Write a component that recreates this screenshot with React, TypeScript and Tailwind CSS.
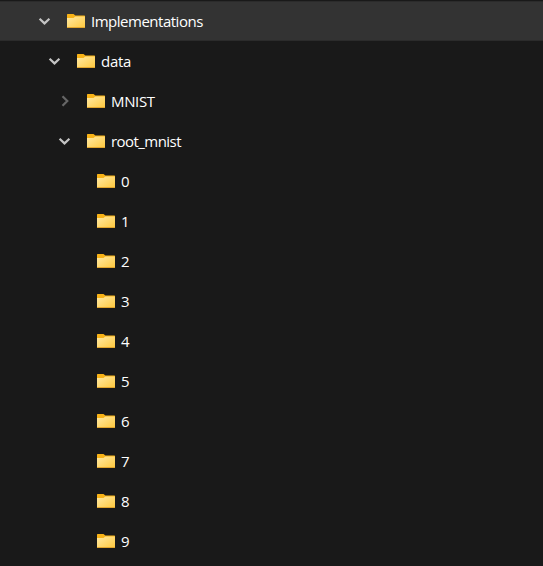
type Item = { name: string; indent: string; state?: 'open' | 'closed'; selected?: boolean; tracking?: string };

const items: Item[] = [
  { name: 'Implementations', indent: 'pl-[38px]', state: 'open', selected: true, tracking: 'tracking-[-0.49px]' },
  { name: 'data', indent: 'pl-12', state: 'open', tracking: 'tracking-[-0.3px]' },
  { name: 'MNIST', indent: 'pl-[58px]', state: 'closed', tracking: 'tracking-[-0.35px]' },
  { name: 'root_mnist', indent: 'pl-[58px]', state: 'open', tracking: 'tracking-[-0.55px]' },
  ...Array.from({ length: 10 }, (_, i) => ({ name: String(i), indent: 'pl-[68px]' })),
];

function Chevron({ state }: { state?: 'open' | 'closed' }) {
  return (
    <svg width="13" height="14" viewBox="0 0 13 14" fill="none" strokeWidth="2.2" className="shrink-0">
      {state === 'open' && <path d="M1.6 4.7 6.5 9.4 11.4 4.7" stroke="#c4c4c4" />}
      {state === 'closed' && <path d="M4.5 2.2 9.3 7 4.5 11.8" stroke="#666666" />}
    </svg>
  );
}

function Folder() {
  return (
    <svg width="18" height="14" viewBox="0 0 18 14" className="ml-4 shrink-0">
      <defs>
        <linearGradient id="folder-face" x1="0" y1="0" x2="1" y2="1">
          <stop offset="0" stopColor="#ffe9a4" />
          <stop offset="1" stopColor="#ffc83c" />
        </linearGradient>
      </defs>
      <path d="M0 .5L.5 0H6.5L8.3 1.5H17.5L18 2V6H0Z" fill="#f9b316" />
      <path d="M0 4H6.5L8.3 2.6H18V13.5L17.5 14H.5L0 13.5Z" fill="url(#folder-face)" />
      <path d="M0 13H18V13.5L17.5 14H.5L0 13.5Z" fill="#e2a52c" />
    </svg>
  );
}

export default function App() {
  return (
    <div className="h-[566px] w-[543px] overflow-hidden bg-[#191919] pt-px font-['Open_Sans','Noto_Sans',sans-serif] text-[15px] leading-5 text-white">
      {items.map((item) => (
        <div
          key={item.name}
          className={`flex h-10 items-center ${item.indent} ${item.selected ? 'border-y border-[#2b2b2b] bg-[#333333]' : ''}`}
        >
          <Chevron state={item.state} />
          <Folder />
          <span className={`ml-1.5 whitespace-nowrap ${item.tracking ?? ''}`}>{item.name}</span>
        </div>
      ))}
    </div>
  );
}
